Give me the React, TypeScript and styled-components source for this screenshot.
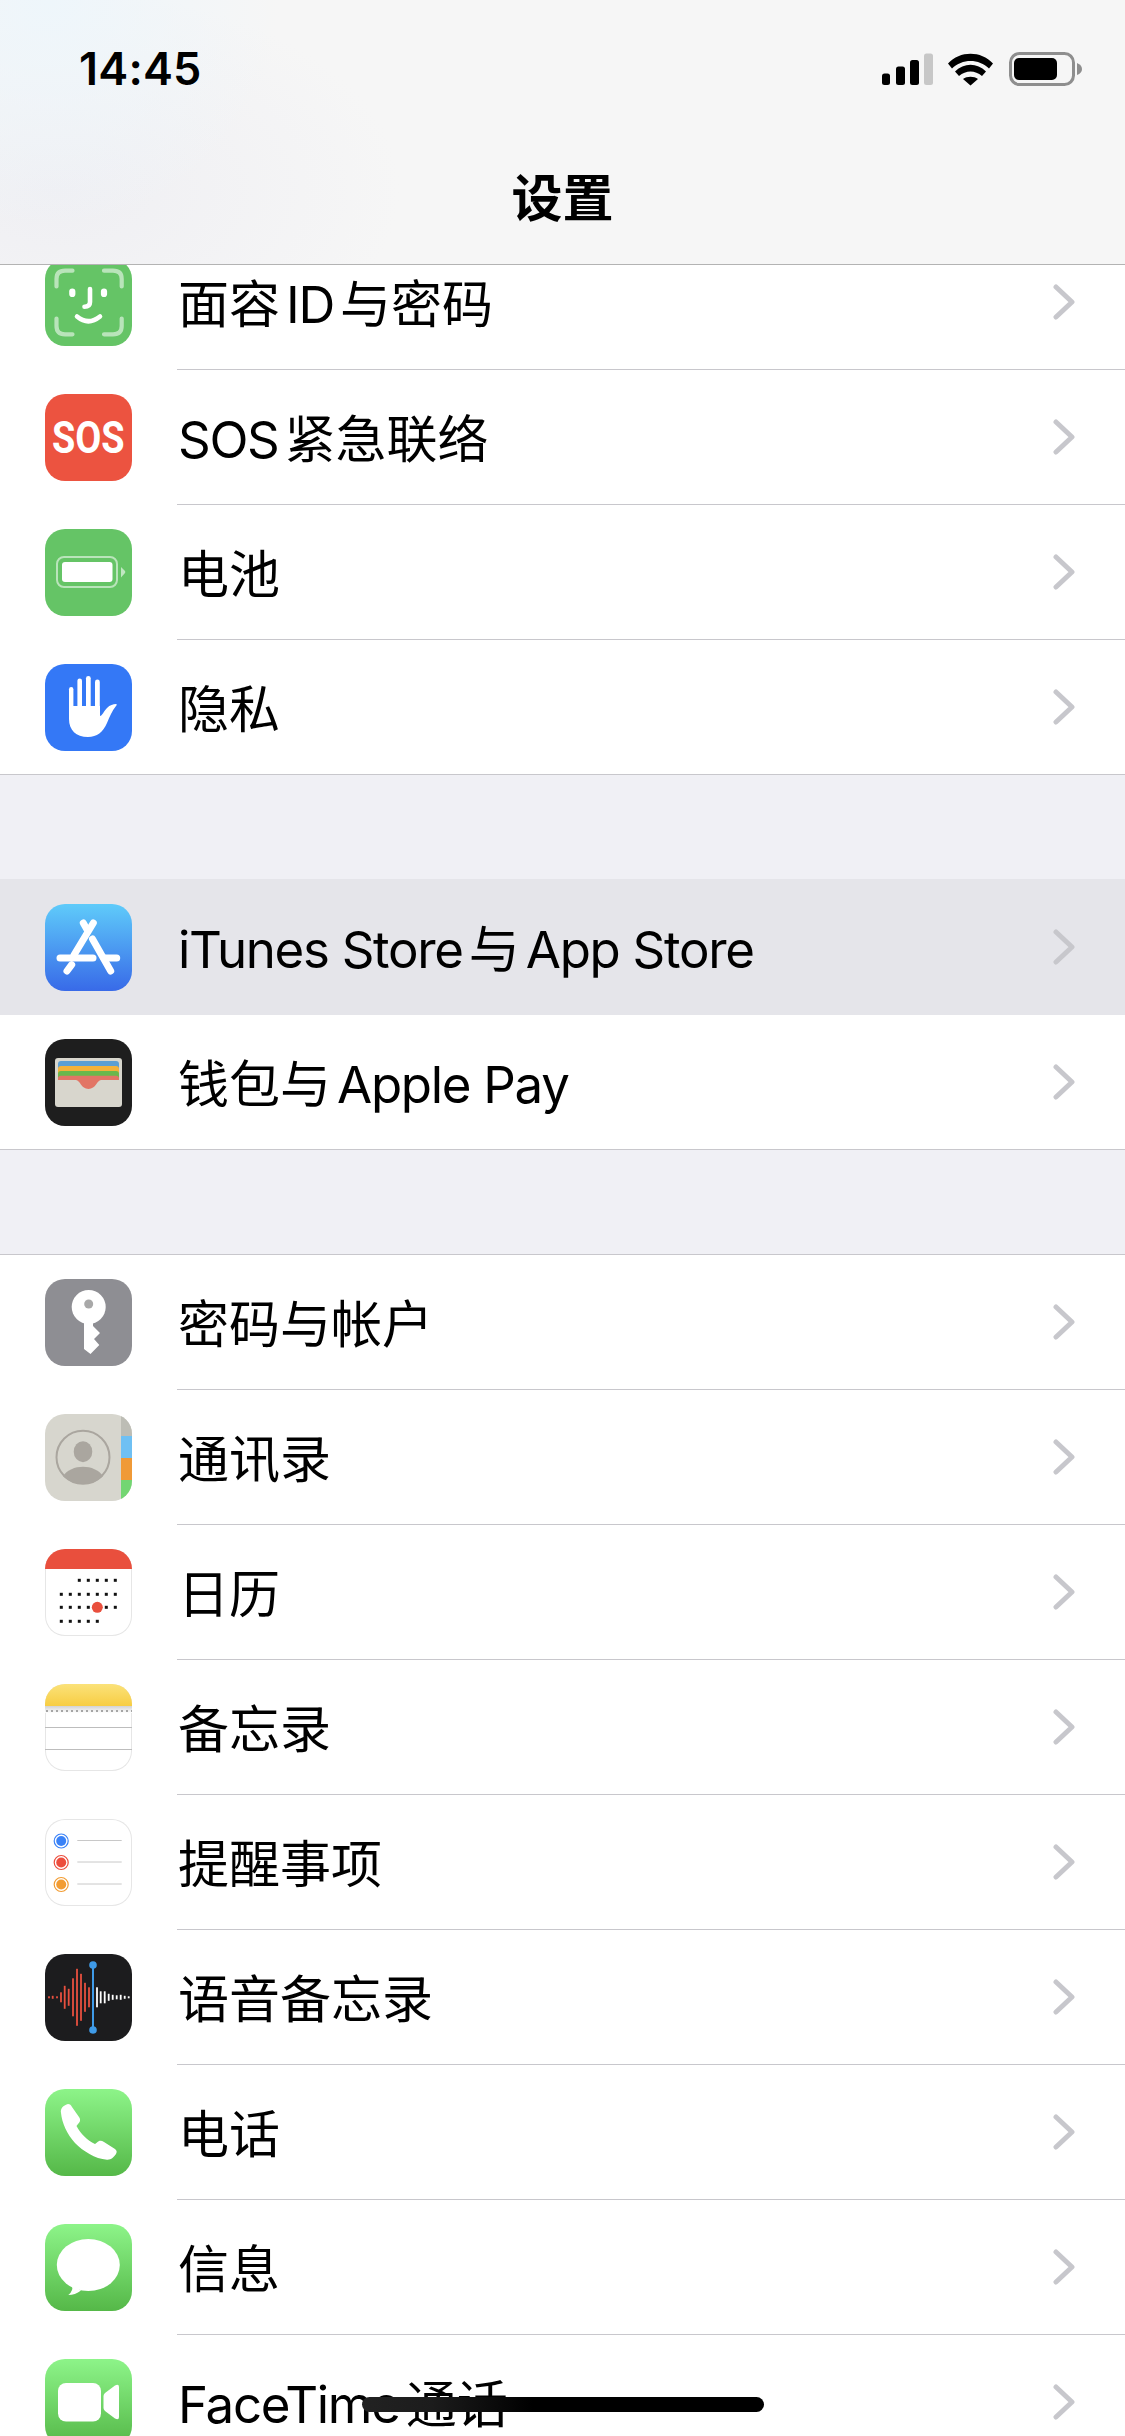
import React from "react";
import styled, { createGlobalStyle } from "styled-components";

const GlobalStyle = createGlobalStyle`
  html, body {
    margin: 0;
    padding: 0;
    background: #ffffff;
  }
  body {
    font-family: Inter, "Noto Sans CJK SC", sans-serif;
  }
`;

const Screen = styled.div`
  position: relative;
  width: 1125px;
  height: 2436px;
  overflow: hidden;
  background: #ffffff;
  display: flex;
  flex-direction: column;
`;

const NavBar = styled.header`
  position: relative;
  z-index: 2;
  flex: none;
  height: 264px;
  border-bottom: 1px solid #b3b3b3;
  background:
    radial-gradient(circle at 50px 0, #eef6fb 0, rgba(240, 246, 250, 0) 230px),
    radial-gradient(ellipse 340px 200px at 60px 190px, #efeff3 0, rgba(239, 239, 243, 0) 100%),
    #f6f6f6;
`;

const StatusBar = styled.div`
  height: 165px;
  padding: 44px 43px 0 79px;
  box-sizing: border-box;
  display: flex;
  justify-content: space-between;
  align-items: flex-start;
`;

const Clock = styled.span`
  font-family: Inter, sans-serif;
  font-size: 45px;
  line-height: 50px;
  font-weight: 600;
  letter-spacing: 0.2px;
  color: #000000;
`;

const Title = styled.h1`
  margin: 0;
  text-align: center;
  font-family: "Noto Sans CJK SC", sans-serif;
  font-size: 51px;
  line-height: 60px;
  font-weight: 700;
  color: #000000;
`;

const StatusIcons = styled.svg`
  display: block;
  margin-top: 8px;
`;

const List = styled.main`
  flex: none;
  margin-top: -31px;
`;

const Group = styled.section<{ $flush?: boolean }>`
  background: #ffffff;
  border-top: 1px solid ${(p) => (p.$flush ? "#e5e5ea" : "#c8c7cc")};
  border-bottom: 1px solid #c8c7cc;
`;

const Spacer = styled.div`
  height: 104px;
  background: #f0f0f5;
`;

const Row = styled.div<{ $selected?: boolean }>`
  display: flex;
  align-items: stretch;
  padding-left: 45px;
  background: ${(p) => (p.$selected ? "#e5e5ea" : "#ffffff")};
`;

const Tile = styled.div<{ $bg: string; $line?: boolean }>`
  flex: none;
  width: 87px;
  height: 87px;
  margin: 24px 45px 23px 0;
  box-sizing: border-box;
  border-radius: 20px;
  overflow: hidden;
  background: ${(p) => p.$bg};
  box-shadow: ${(p) => (p.$line ? "inset 0 0 0 1px #e6e6e6" : "none")};
  display: flex;
  align-items: center;
  justify-content: center;

  svg {
    display: block;
  }
`;

const SosText = styled.span`
  font-family: Roboto, sans-serif;
  font-size: 45px;
  line-height: 50px;
  font-weight: 700;
  color: #ffffff;
  transform: scaleX(0.84);
`;

const RowBody = styled.div<{ $border: "line" | "clear" | "none" }>`
  flex: 1;
  height: 134px;
  display: flex;
  align-items: center;
  justify-content: space-between;
  padding: 0 50px 0 1px;
  border-bottom: ${(p) =>
    p.$border === "line" ? "1px solid #c8c7cc" : p.$border === "clear" ? "1px solid transparent" : "none"};
`;

const Label = styled.span`
  padding-top: 6px;
  font-family: Inter, "Noto Sans CJK SC", sans-serif;
  font-size: 51px;
  line-height: 60px;
  color: #000000;
  white-space: nowrap;
`;

// latin runs sit a little apart from the CJK around them, and run tighter than Inter does
const Latin = styled.span`
  margin: 0 6px;
  letter-spacing: -1.3px;

  &:first-child {
    margin-left: 0;
  }
  &:last-child {
    margin-right: 0;
  }
`;

const HomeBar = styled.div`
  position: absolute;
  z-index: 3;
  left: 362px;
  top: 2397px;
  width: 402px;
  height: 15px;
  border-radius: 8px;
  background: linear-gradient(90deg, #222222 0, #1c1c1c 70px, #000000 170px);
`;

const Glyph = ({ children }: { children: React.ReactNode }) => (
  <svg width="87" height="87" viewBox="0 0 87 87">
    {children}
  </svg>
);

const Chevron = () => (
  <svg width="22" height="36" viewBox="0 0 22 36">
    <path
      d="M3 3 L19 18 L3 33"
      fill="none"
      stroke="#c7c7cc"
      strokeWidth="5"
      strokeLinecap="round"
      strokeLinejoin="round"
    />
  </svg>
);

const FaceIdIcon = () => (
  <Tile $bg="#65c466">
    <Glyph>
      <g fill="none" stroke="#ffffff" strokeOpacity="0.55" strokeWidth="4.2" strokeLinecap="round">
        <path d="M11.5 27.5 V20 Q11.5 11.7 20 11.7 H27.5" />
        <path d="M59 11.7 H68 Q76.7 11.7 76.7 20 V27.5" />
        <path d="M11.5 59.5 V67 Q11.5 75.3 20 75.3 H27.5" />
        <path d="M59 75.3 H68 Q76.7 75.3 76.7 67 V59.5" />
      </g>
      <g fill="none" stroke="#ffffff" strokeWidth="6.2" strokeLinecap="round">
        <path d="M27.3 32.5 V35" />
        <path d="M59 32.5 V35" />
      </g>
      <g fill="none" stroke="#ffffff" strokeWidth="4.6" strokeLinecap="round">
        <path d="M45 30 V43 Q45 47.7 39.5 47.7" />
        <path d="M32 57.5 Q43.3 67 55 57.5" />
      </g>
    </Glyph>
  </Tile>
);

const SosIcon = () => (
  <Tile $bg="#ec5340">
    <SosText>SOS</SosText>
  </Tile>
);

const BatteryIcon = () => (
  <Tile $bg="#65c466">
    <Glyph>
      <rect x="12" y="28" width="60" height="30" rx="7" fill="none" stroke="#ffffff" strokeOpacity="0.55" strokeWidth="2" />
      <rect x="17" y="33" width="50.5" height="20" rx="3" fill="#ffffff" />
      <path d="M76 38 L80 42 Q80.6 43 80 44 L76 48.5 Z" fill="#ffffff" fillOpacity="0.6" />
    </Glyph>
  </Tile>
);

const PrivacyIcon = () => (
  <Tile $bg="#3478f6">
    <Glyph>
      <g fill="#ffffff">
        <rect x="24" y="23" width="4.4" height="24" rx="2.2" />
        <rect x="32.4" y="14.5" width="4.6" height="32" rx="2.3" />
        <rect x="41" y="12" width="4.7" height="34" rx="2.3" />
        <rect x="50" y="15.5" width="4.8" height="32" rx="2.4" />
        <path d="M24 42 H55 V52 C57 52 59 47 62 44 C65 41 68 40 71 40 C72 40 72 41 71 42 C67 47 65 52 62 59 C58 68 52 73 43 73 C31 73 24 66 24 55 Z" />
      </g>
    </Glyph>
  </Tile>
);

const AppStoreIcon = () => (
  <Tile $bg="linear-gradient(180deg, #5fcbfa 0%, #386ae8 100%)">
    <Glyph>
      <g fill="none" stroke="#ffffff" strokeWidth="7" strokeLinecap="round">
        <path d="M48.3 19 L29 51" />
        <path d="M38.3 19 L42 25.5" />
        <path d="M47.5 35 L65.7 67" />
        <path d="M15 54 H48" />
        <path d="M59 54 H71.7" />
        <path d="M26.7 60.7 L22 67" />
      </g>
    </Glyph>
  </Tile>
);

const WalletIcon = () => (
  <Tile $bg="#1e1e1e">
    <Glyph>
      <rect x="10" y="19" width="67" height="49" rx="3" fill="#d8d6cd" />
      <path d="M13 30 V25 Q13 22 16 22 H71 Q74 22 74 25 V30 Z" fill="#5b9fd4" />
      <path d="M13 35 V30 Q13 27 16 27 H71 Q74 27 74 30 V35 Z" fill="#f4b23a" />
      <path d="M13 40 V35 Q13 32 16 32 H71 Q74 32 74 35 V40 Z" fill="#69b84c" />
      <path d="M13 41 V39.5 Q13 36.7 16 36.7 H71 Q74 36.7 74 39.5 V41 H56 C52 41 51 50 43.5 50 C36 50 35 41 31 41 Z" fill="#e27565" />
    </Glyph>
  </Tile>
);

const KeyIcon = () => (
  <Tile $bg="#8e8e93">
    <Glyph>
      <circle cx="43.7" cy="28" r="17" fill="#ffffff" />
      <circle cx="43.7" cy="25" r="4.5" fill="#a8a8a8" />
      <path d="M39 40 V70 L45.5 75 L54.3 66 L49 60 L55 54 L48 47 V40 Z" fill="#ffffff" />
    </Glyph>
  </Tile>
);

const ContactsIcon = () => (
  <Tile $bg="#d7d6ce">
    <Glyph>
      <rect x="76" y="0" width="11" height="22" fill="#bdbdb5" />
      <rect x="76" y="22" width="11" height="22" fill="#6fc0f3" />
      <rect x="76" y="44" width="11" height="22" fill="#f09a37" />
      <rect x="76" y="66" width="11" height="21" fill="#73d672" />
      <circle cx="38" cy="43.3" r="26.5" fill="none" stroke="#aaa69f" strokeWidth="2" />
      <ellipse cx="38" cy="37.7" rx="9.3" ry="10.5" fill="#aaa69f" />
      <path d="M18 62 C22 56 30 52.7 38 52.7 C46 52.7 54 56 58 62 C53 67 46 70 38 70 C30 70 23 67 18 62 Z" fill="#aaa69f" />
    </Glyph>
  </Tile>
);

const calendarCols = [16.3, 25.3, 34.3, 43.3, 52.3, 61.3, 70.3];
const calendarRows: [number, number, number][] = [
  [31.3, 2, 6],
  [45.3, 0, 6],
  [58.3, 0, 6],
  [72.3, 0, 4],
];

const CalendarIcon = () => (
  <Tile $bg="#ffffff" $line>
    <Glyph>
      <rect x="0" y="0" width="87" height="20" fill="#e94f3d" />
      {calendarRows.map(([y, from, to]) =>
        calendarCols
          .slice(from, to + 1)
          .map((x) => <rect key={`${x}-${y}`} x={x - 1.5} y={y - 1.5} width="3" height="3" fill="#111111" />)
      )}
      <circle cx="52.3" cy="58.3" r="5.5" fill="#e94f3d" />
    </Glyph>
  </Tile>
);

const NotesIcon = () => (
  <Tile $bg="#ffffff" $line>
    <Glyph>
      <defs>
        <linearGradient id="notesTop" x1="0" y1="0" x2="0" y2="1">
          <stop offset="0" stopColor="#fbe27a" />
          <stop offset="1" stopColor="#f7cd43" />
        </linearGradient>
        <linearGradient id="notesShade" x1="0" y1="0" x2="0" y2="1">
          <stop offset="0" stopColor="#d2d2d2" />
          <stop offset="1" stopColor="#ffffff" />
        </linearGradient>
      </defs>
      <rect x="0" y="0" width="87" height="22" fill="url(#notesTop)" />
      <rect x="0" y="22" width="87" height="7" fill="url(#notesShade)" />
      <path d="M1 27 H87" stroke="#a5a5a5" strokeWidth="2" strokeDasharray="2 3" />
      <path d="M0 43.5 H87 M0 65.5 H87" stroke="#bdbdbd" strokeWidth="1" />
    </Glyph>
  </Tile>
);

const reminderDots = [
  { y: 22, color: "#3a82f7" },
  { y: 43.5, color: "#ec4d3d" },
  { y: 65.5, color: "#f29c32" },
];

const RemindersIcon = () => (
  <Tile $bg="#ffffff" $line>
    <Glyph>
      {reminderDots.map((d) => (
        <g key={d.y}>
          <circle cx="16.2" cy={d.y} r="7" fill="none" stroke={d.color} strokeWidth="1.2" />
          <circle cx="16.2" cy={d.y} r="5" fill={d.color} />
          <path d={`M32.3 ${d.y - 0.5} H76.7`} stroke="#c8c8c8" strokeWidth="1" />
        </g>
      ))}
    </Glyph>
  </Tile>
);

const redBars: [number, number][] = [
  [4, 2], [7.7, 3], [12, 2], [16, 10], [19.7, 23], [23.7, 17], [28, 38], [32, 57], [36, 47], [40, 29], [44, 20],
];
const whiteBars: [number, number][] = [
  [52, 20], [55.7, 12], [59.7, 12], [63.7, 7], [67.7, 5], [71.7, 4], [75.7, 5], [79.7, 3], [83.7, 2],
];

const VoiceMemosIcon = () => (
  <Tile $bg="#1c1c1e">
    <Glyph>
      {redBars.map(([x, h]) => (
        <rect key={x} x={x - 0.9} y={43.3 - h / 2} width="1.8" height={h} fill="#e8503f" />
      ))}
      {whiteBars.map(([x, h]) => (
        <rect key={x} x={x - 0.9} y={43.3 - h / 2} width="1.8" height={h} fill="#ffffff" />
      ))}
      <path d="M48 11 V76" stroke="#3f9be8" strokeWidth="2" />
      <circle cx="48" cy="11" r="3.8" fill="#3f9be8" />
      <circle cx="48" cy="76" r="3.8" fill="#3f9be8" />
    </Glyph>
  </Tile>
);

const greenTile = "linear-gradient(180deg, #8df489 0%, #55b848 100%)";

const PhoneIcon = () => (
  <Tile $bg={greenTile}>
    <Glyph>
      <path
        d="M16 24 C15 19 19 16 23 15 C25 15 26 16 27 18 L34 28 C36 31 35 33 33 35 L31.5 37 C36 45 42 51 50 55 L52 53.5 C54 51.5 56 51 59 53 L70 60 C72 61.5 72 63 71 65 C69 68 66 71 62 70.7 C50 70 38 62 30 54 C22 45 17 34 16 24 Z"
        fill="#ffffff"
      />
    </Glyph>
  </Tile>
);

const MessagesIcon = () => (
  <Tile $bg={greenTile}>
    <Glyph>
      <ellipse cx="43.3" cy="41" rx="31.5" ry="26" fill="#ffffff" />
      <path d="M26 60 Q28 64 27 66 Q26 69 23.3 71 Q30 71 36 66.5 Z" fill="#ffffff" />
    </Glyph>
  </Tile>
);

const FaceTimeIcon = () => (
  <Tile $bg={greenTile}>
    <Glyph>
      <rect x="13" y="24" width="43" height="38.5" rx="8" fill="#ffffff" />
      <path d="M58.5 37 Q58.5 35.5 60 34 L70 26.5 Q74 24.5 74 28 V58 Q74 61.5 70 59.5 L60 52 Q58.5 50.5 58.5 49 Z" fill="#ffffff" />
    </Glyph>
  </Tile>
);

type Item = { label: string; icon: React.ReactNode; selected?: boolean };

const firstGroup: Item[] = [
  { label: "面容ID与密码", icon: <FaceIdIcon /> },
  { label: "SOS紧急联络", icon: <SosIcon /> },
  { label: "电池", icon: <BatteryIcon /> },
  { label: "隐私", icon: <PrivacyIcon /> },
];

const secondGroup: Item[] = [
  { label: "iTunes Store与App Store", icon: <AppStoreIcon />, selected: true },
  { label: "钱包与Apple Pay", icon: <WalletIcon /> },
];

const thirdGroup: Item[] = [
  { label: "密码与帐户", icon: <KeyIcon /> },
  { label: "通讯录", icon: <ContactsIcon /> },
  { label: "日历", icon: <CalendarIcon /> },
  { label: "备忘录", icon: <NotesIcon /> },
  { label: "提醒事项", icon: <RemindersIcon /> },
  { label: "语音备忘录", icon: <VoiceMemosIcon /> },
  { label: "电话", icon: <PhoneIcon /> },
  { label: "信息", icon: <MessagesIcon /> },
  { label: "FaceTime通话", icon: <FaceTimeIcon /> },
];

const renderLabel = (label: string) =>
  label
    .split(/([A-Za-z][A-Za-z ]*)/)
    .filter(Boolean)
    .map((part, i) => (/^[A-Za-z]/.test(part) ? <Latin key={i}>{part}</Latin> : <span key={i}>{part}</span>));

const SettingsGroup = ({ items, flush }: { items: Item[]; flush?: boolean }) => (
  <Group $flush={flush}>
    {items.map((item, i) => (
      <Row key={item.label} $selected={item.selected}>
        {item.icon}
        <RowBody $border={i === items.length - 1 ? "none" : item.selected ? "clear" : "line"}>
          <Label>{renderLabel(item.label)}</Label>
          <Chevron />
        </RowBody>
      </Row>
    ))}
  </Group>
);

function App() {
  return (
    <Screen>
      <GlobalStyle />
      <NavBar>
        <StatusBar>
          <Clock>14:45</Clock>
          <StatusIcons width="200" height="36" viewBox="0 0 200 36">
            <g>
              <rect x="0" y="21.5" width="8" height="11.5" rx="2.5" fill="#000" />
              <rect x="14" y="14.5" width="9" height="18.5" rx="2.5" fill="#000" />
              <rect x="28" y="8" width="9" height="25" rx="2.5" fill="#000" />
              <rect x="42" y="1.5" width="9" height="31.5" rx="2.5" fill="#c7c7c7" />
            </g>
            <path
              d="M66 12 C78 -1 99 -1 111 12 L107 17 C97 7 80 7 70 17 Z M73 20 C82 11 95 11 104 20 L100 24.5 C93 18.5 84 18.5 77 24.5 Z M81 27.5 C85 24.5 92 24.5 96 27.5 L88.5 34 Z"
              fill="#000"
              transform="translate(0 -0.5)"
            />
            <rect x="128.5" y="1.5" width="63" height="31" rx="9" fill="none" stroke="#8e8e8e" strokeWidth="3" />
            <rect x="132" y="6" width="43" height="22" rx="5" fill="#000" />
            <path d="M195 11 Q200 13 200 17 Q200 21 195 23 Z" fill="#8e8e8e" />
          </StatusIcons>
        </StatusBar>
        <Title>设置</Title>
      </NavBar>
      <List>
        <SettingsGroup items={firstGroup} />
        <Spacer />
        <SettingsGroup items={secondGroup} flush />
        <Spacer />
        <SettingsGroup items={thirdGroup} />
      </List>
      <HomeBar />
    </Screen>
  );
}

export default App;
